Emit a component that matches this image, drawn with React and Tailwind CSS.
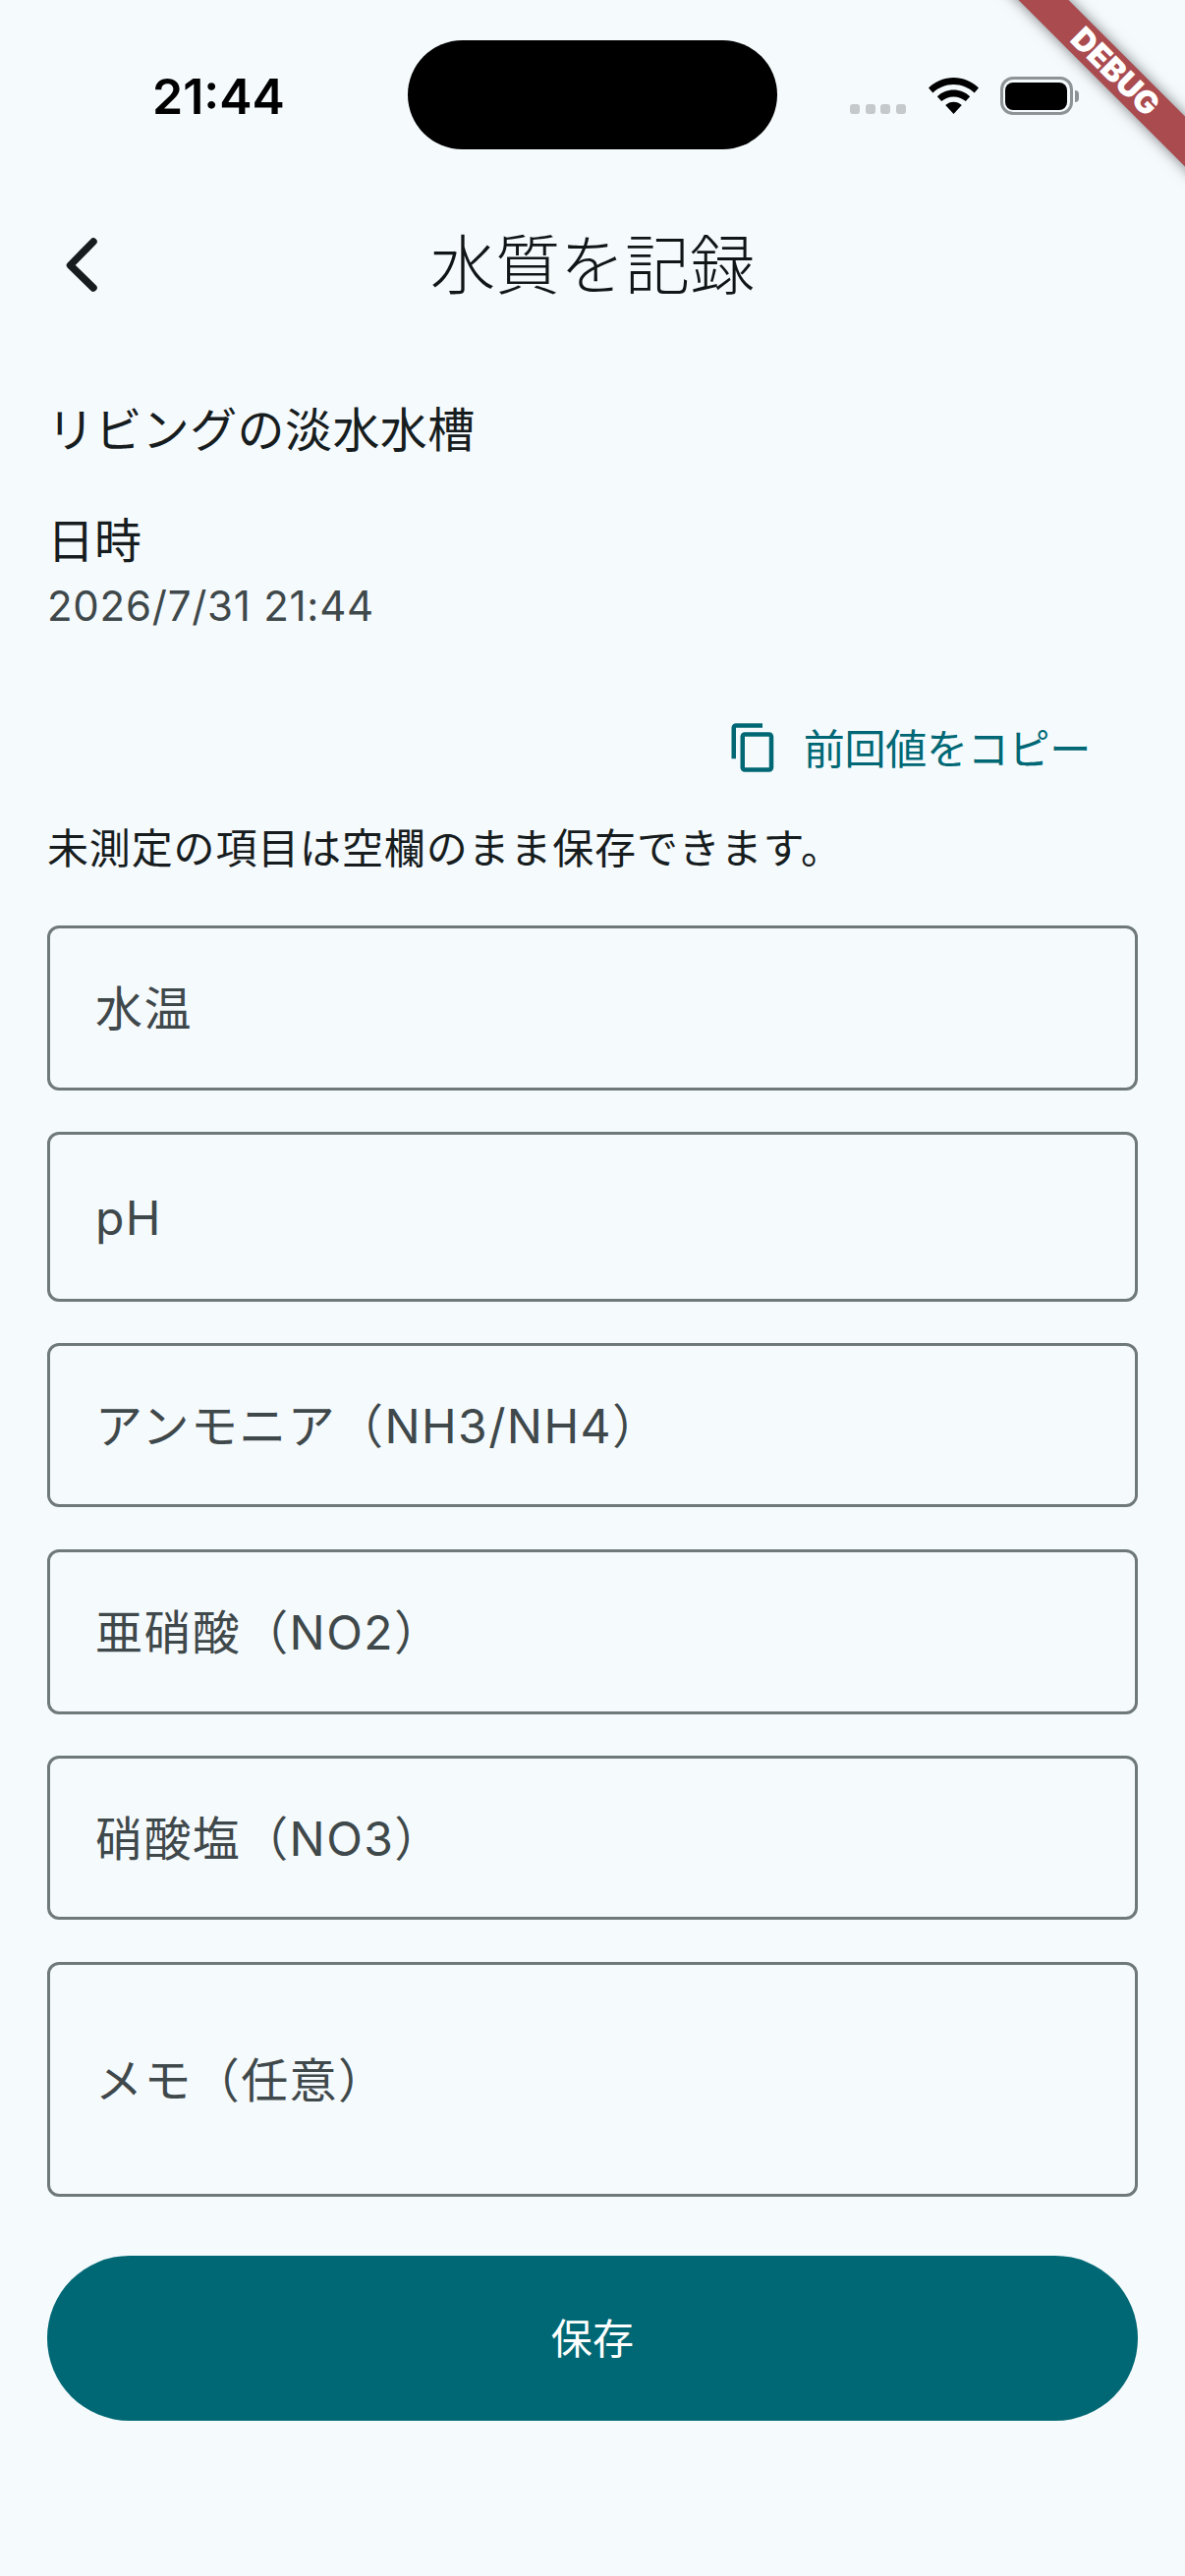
const fields = [
    { label: '水温', height: 'h-[168px]', gap: 'mb-[42px]' },
    { label: 'pH', height: 'h-[173px]', gap: 'mb-[42px]' },
    { label: 'アンモニア（NH3/NH4）', height: 'h-[167px]', gap: 'mb-[43px]' },
    { label: '亜硝酸（NO2）', height: 'h-[168px]', gap: 'mb-[42px]' },
    { label: '硝酸塩（NO3）', height: 'h-[167px]', gap: 'mb-[43px]' },
    { label: 'メモ（任意）', height: 'h-[239px]', gap: 'mb-[60px]' },
];

const StatusBar = () => (
    <div className="flex h-[186px] items-start">
        <div className="w-[415px] pl-[155px] pt-[68px]">
            <span className="block text-[50px] leading-[60px] font-semibold text-black">21:44</span>
        </div>
        <div className="mt-[41px] h-[111px] w-[376px] rounded-[56px] bg-black" />
        <div className="flex items-start pl-[74px] pt-[78px]">
            <div className="mt-[28px] flex gap-[5.5px]">
                <span className="h-[10px] w-[10px] rounded-[3px] bg-[#c5c9cc]" />
                <span className="h-[10px] w-[10px] rounded-[3px] bg-[#c5c9cc]" />
                <span className="h-[10px] w-[10px] rounded-[3px] bg-[#c5c9cc]" />
                <span className="h-[10px] w-[10px] rounded-[3px] bg-[#c5c9cc]" />
            </div>
            <svg className="ml-[23px] mt-[1px]" width="51" height="37" viewBox="0 0 51 37" fill="#000">
                <path d="M25.5 0C35 0 44 3.8 51 10.5L46.6 15.5C40.8 10 33.4 7 25.5 7S10.2 10 4.4 15.5L0 10.5C7 3.8 16 0 25.5 0Z" />
                <path d="M25.5 12.5C31.8 12.500 37.600 14.900 42.200 19.200L37.800 24.100C34.400 21 30.100 19.400 25.500 19.400S16.600 21 13.200 24.100L8.800 19.200C13.400 14.900 19.200 12.500 25.500 12.500Z" />
                <path d="M25.500 24.800C28.600 24.800 31.500 26 33.800 28.100L25.500 37L17.200 28.100C19.500 26 22.400 24.800 25.500 24.800Z" />
            </svg>
            <div className="ml-[22px] flex items-center">
                <div className="h-[39px] w-[74px] rounded-[13px] border-[3px] border-[#8e9396] p-[2.5px]">
                    <div className="h-full w-full rounded-[8px] bg-black" />
                </div>
                <div className="ml-[2px] h-[12px] w-[4px] rounded-r-full bg-[#8e9396]" />
            </div>
        </div>
    </div>
);

export default function App() {
    return (
        <div className="relative min-h-screen overflow-hidden bg-[#f5fafd] font-['Inter','Noto_Sans_CJK_JP',sans-serif] font-normal text-[#171d1e]">
            <StatusBar />

            <header className="grid h-[168px] grid-cols-[1fr_auto_1fr] items-center">
                <button className="pl-[60px] text-left">
                    <svg width="46" height="62" viewBox="0 0 46 62" fill="none" stroke="#171d1e" strokeWidth="7.5" strokeLinecap="round" strokeLinejoin="round">
                        <path d="M35 7 L11.500 31 L35 54" />
                    </svg>
                </button>
                <h1 className="text-[66px] leading-[84px] font-light text-[#101516]">水質を記録</h1>
                <div />
            </header>

            <main className="px-[48px]">
                <p className="mt-[48px] text-[48px] leading-[72px] tracking-[0.4px]">リビングの淡水水槽</p>
                <p className="mt-[45px] text-[48px] leading-[64px]">日時</p>
                <p className="mt-[6px] text-[42px] leading-[56px] tracking-[0.75px] text-[#3f484a]">2026/7/31 21:44</p>

                <div className="mt-[86px] flex h-[60px] items-center justify-end pr-[48px]">
                    <svg width="54" height="54" viewBox="0 0 24 24" fill="#006874">
                        <path d="M16 1H4c-1.100 0-2 .9-2 2v14h2V3h12V1zm3 4H8c-1.100 0-2 .9-2 2v14c0 1.100.9 2 2 2h11c1.100 0 2-.9 2-2V7c0-1.100-.9-2-2-2zm0 16H8V7h11v14z" />
                    </svg>
                    <span className="ml-[24px] pt-[3px] text-[42px] leading-[60px] tracking-[-0.25px] text-[#006874]">前回値をコピー</span>
                </div>

                <p className="mt-[45px] mb-[50px] text-[42px] leading-[56px] tracking-[0.85px]">未測定の項目は空欄のまま保存できます。</p>

                {fields.map((field) => (
                    <div
                        key={field.label}
                        className={`flex items-center rounded-[12px] border-[3px] border-[#6f797a] pt-[2px] pl-[46px] text-[48px] tracking-[1.4px] text-[#3f484a] ${field.height} ${field.gap}`}
                    >
                        {field.label}
                    </div>
                ))}

                <button className="flex h-[168px] w-full items-center justify-center rounded-full bg-[#006874] text-[42px] tracking-[0.3px] text-white">
                    保存
                </button>
            </main>

            <div className="absolute left-[984.500px] top-[55px] flex h-[36px] w-[300px] rotate-45 items-center justify-center bg-[#a94b4f] text-[32px] leading-[36px] font-black text-white shadow-[0_0_14px_rgba(0,0,0,0.5)]">
                DEBUG
            </div>
        </div>
    );
}
